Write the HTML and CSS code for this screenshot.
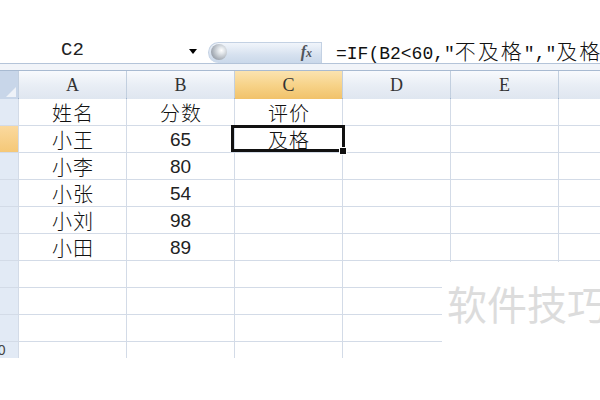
FILE: index.html
```html
<!DOCTYPE html>
<html lang="zh-CN">
<head>
<meta charset="utf-8">
<title>Excel IF</title>
<link rel="stylesheet" href="styles.css">
</head>
<body>
<div class="app">
  <div class="topspace"></div>
  <div class="fbar">
    <div class="namebox"><span class="nb-text">C2</span><span class="dd"></span></div>
    <div class="pill"><span class="knob"></span><span class="fx">f<span class="fx-x">x</span></span></div>
    <div class="formula">=IF(B2&lt;60,"<span class="cjk">不及格</span>","<span class="cjk">及格</span>")</div>
  </div>
  <div class="band"></div>
  <div class="colhead">
    <div class="corner"></div>
    <div class="ch">A</div>
    <div class="ch">B</div>
    <div class="ch ch-sel">C</div>
    <div class="ch">D</div>
    <div class="ch">E</div>
    <div class="ch"></div>
  </div>
  <div class="grid">
    <div class="rh"></div><div class="c cjk">姓名</div><div class="c cjk">分数</div><div class="c cjk">评价</div><div class="c"></div><div class="c"></div><div class="c"></div>
    <div class="rh rh-sel"></div><div class="c cjk">小王</div><div class="c num">65</div><div class="c cjk active">及格<span class="handle"></span></div><div class="c"></div><div class="c"></div><div class="c"></div>
    <div class="rh"></div><div class="c cjk">小李</div><div class="c num">80</div><div class="c"></div><div class="c"></div><div class="c"></div><div class="c"></div>
    <div class="rh"></div><div class="c cjk">小张</div><div class="c num">54</div><div class="c"></div><div class="c"></div><div class="c"></div><div class="c"></div>
    <div class="rh"></div><div class="c cjk">小刘</div><div class="c num">98</div><div class="c"></div><div class="c"></div><div class="c"></div><div class="c"></div>
    <div class="rh"></div><div class="c cjk">小田</div><div class="c num">89</div><div class="c"></div><div class="c"></div><div class="c"></div><div class="c"></div>
    <div class="rh"></div><div class="c"></div><div class="c"></div><div class="c"></div><div class="c"></div><div class="c"></div><div class="c"></div>
    <div class="rh"></div><div class="c"></div><div class="c"></div><div class="c"></div><div class="c"></div><div class="c"></div><div class="c"></div>
    <div class="rh"></div><div class="c"></div><div class="c"></div><div class="c"></div><div class="c"></div><div class="c"></div><div class="c"></div>
    <div class="rh rh-num">10</div><div class="c"></div><div class="c"></div><div class="c"></div><div class="c"></div><div class="c"></div><div class="c"></div>
  </div>
  <div class="watermark">软件技巧</div>
</div>
</body>
</html>
```
FILE: styles.css
```css
html, body {
  margin: 0;
  padding: 0;
  background: #ffffff;
}
.app {
  position: relative;
  width: 600px;
  height: 400px;
  overflow: hidden;
  background: #ffffff;
  font-family: "Liberation Sans", "Noto Sans CJK SC", sans-serif;
  color: #111;
}
.topspace {
  height: 38px;
}
.fbar {
  display: flex;
  height: 25px;
  border-bottom: 1px solid #b4c4d9;
}
.namebox {
  width: 197px;
  box-sizing: border-box;
  padding-left: 61px;
  display: flex;
  align-items: center;
  justify-content: space-between;
}
.nb-text {
  font-family: "Liberation Mono", monospace;
  font-size: 19px;
  color: #222;
  line-height: 25px;
}
.dd {
  width: 0;
  height: 0;
  border-left: 4.5px solid transparent;
  border-right: 4.5px solid transparent;
  border-top: 5px solid #000;
  margin-top: 2px;
}
.pill {
  margin-left: 11px;
  margin-top: 4px;
  width: 114px;
  height: 21px;
  box-sizing: border-box;
  border-radius: 11px 0 0 11px;
  background: linear-gradient(#f1f5fb, #d6e1ef 60%, #cad8ea);
  border: 1px solid #c3d1e3;
  border-bottom: none;
  display: flex;
  align-items: center;
  justify-content: space-between;
  position: relative;
  overflow: hidden;
}
.knob {
  width: 16px;
  height: 16px;
  border-radius: 50%;
  margin-left: 2px;
  margin-top: -3px;
  background: radial-gradient(circle at 65% 40%, #ffffff 0, #e3e7eb 22%, #a3aab3 68%, #858c96 100%);
}
.fx {
  font-family: "Liberation Serif", serif;
  font-style: italic;
  font-weight: bold;
  font-size: 16px;
  color: #4f545b;
  margin-right: 9px;
  margin-top: -2px;
}
.fx-x {
  font-size: 12px;
}
.formula {
  flex: 1;
  margin-left: 14px;
  white-space: nowrap;
  overflow: hidden;
  font-family: "Liberation Mono", monospace;
  font-size: 18px;
  line-height: 25px;
  color: #111;
}
.formula .cjk {
  font-size: 21px;
  letter-spacing: 2px;
}
.cjk {
  font-family: "Noto Sans CJK SC", sans-serif;
  font-weight: 300;
}
.band {
  height: 6px;
  background: #f1f4f9;
}
.colhead {
  display: grid;
  grid-template-columns: 18px repeat(5, 107px) 1fr;
  column-gap: 1px;
  height: 27px;
  background: #c2cfdf;
  border-top: 1px solid #a8bad1;
  border-bottom: 1px solid #9fb4ce;
}
.corner {
  position: relative;
  background: #c8d6e9;
}
.corner::after {
  content: "";
  position: absolute;
  right: 2px;
  bottom: 2px;
  width: 10px;
  height: 10px;
  background: #eef2f8;
  clip-path: polygon(100% 0, 100% 100%, 0 100%);
}
.ch {
  background: linear-gradient(#f8fafd, #e9eef5 50%, #dfe6f0);
  font-family: "Liberation Serif", serif;
  font-size: 18px;
  line-height: 28px;
  text-align: center;
  color: #333;
}
.ch-sel {
  background: linear-gradient(#fbe3b0, #f7d389 50%, #f1c26a);
}
.grid {
  display: grid;
  grid-template-columns: 18px repeat(5, 107px) 1fr;
  grid-template-rows: repeat(9, 26px) 16px;
  gap: 1px;
  background: #d3dbe7;
}
.rh {
  background: #e2eaf5;
  overflow: hidden;
}
.rh-sel {
  background: linear-gradient(#fad99e, #f5c877);
}
.rh-num {
  font-size: 14px;
  line-height: 16px;
  color: #444;
  text-indent: -10px;
  white-space: nowrap;
}
.c {
  background: #ffffff;
  box-sizing: border-box;
  padding-top: 3px;
  font-size: 20px;
  line-height: 22px;
  text-align: center;
  overflow: visible;
  white-space: nowrap;
}
.cjk.c {
  letter-spacing: 1px;
  text-indent: 1px;
}
.num {
  font-family: "Liberation Sans", sans-serif;
  font-size: 19px;
  color: #222;
}
.active {
  position: relative;
}
.active::before {
  content: "";
  position: absolute;
  left: -4px;
  right: -3px;
  top: -1px;
  bottom: 0;
  border: 3px solid #111;
}
.handle {
  position: absolute;
  right: -5px;
  bottom: -3px;
  width: 6px;
  height: 6px;
  background: #111;
  border: 1px solid #fff;
}
.watermark {
  position: absolute;
  left: 442px;
  top: 262px;
  right: 0;
  bottom: 0;
  background: #ffffff;
  padding: 19px 0 0 5px;
  font-family: "Noto Sans CJK SC", sans-serif;
  font-size: 40px;
  line-height: 44px;
  color: #dcdcdc;
  white-space: nowrap;
}
```
